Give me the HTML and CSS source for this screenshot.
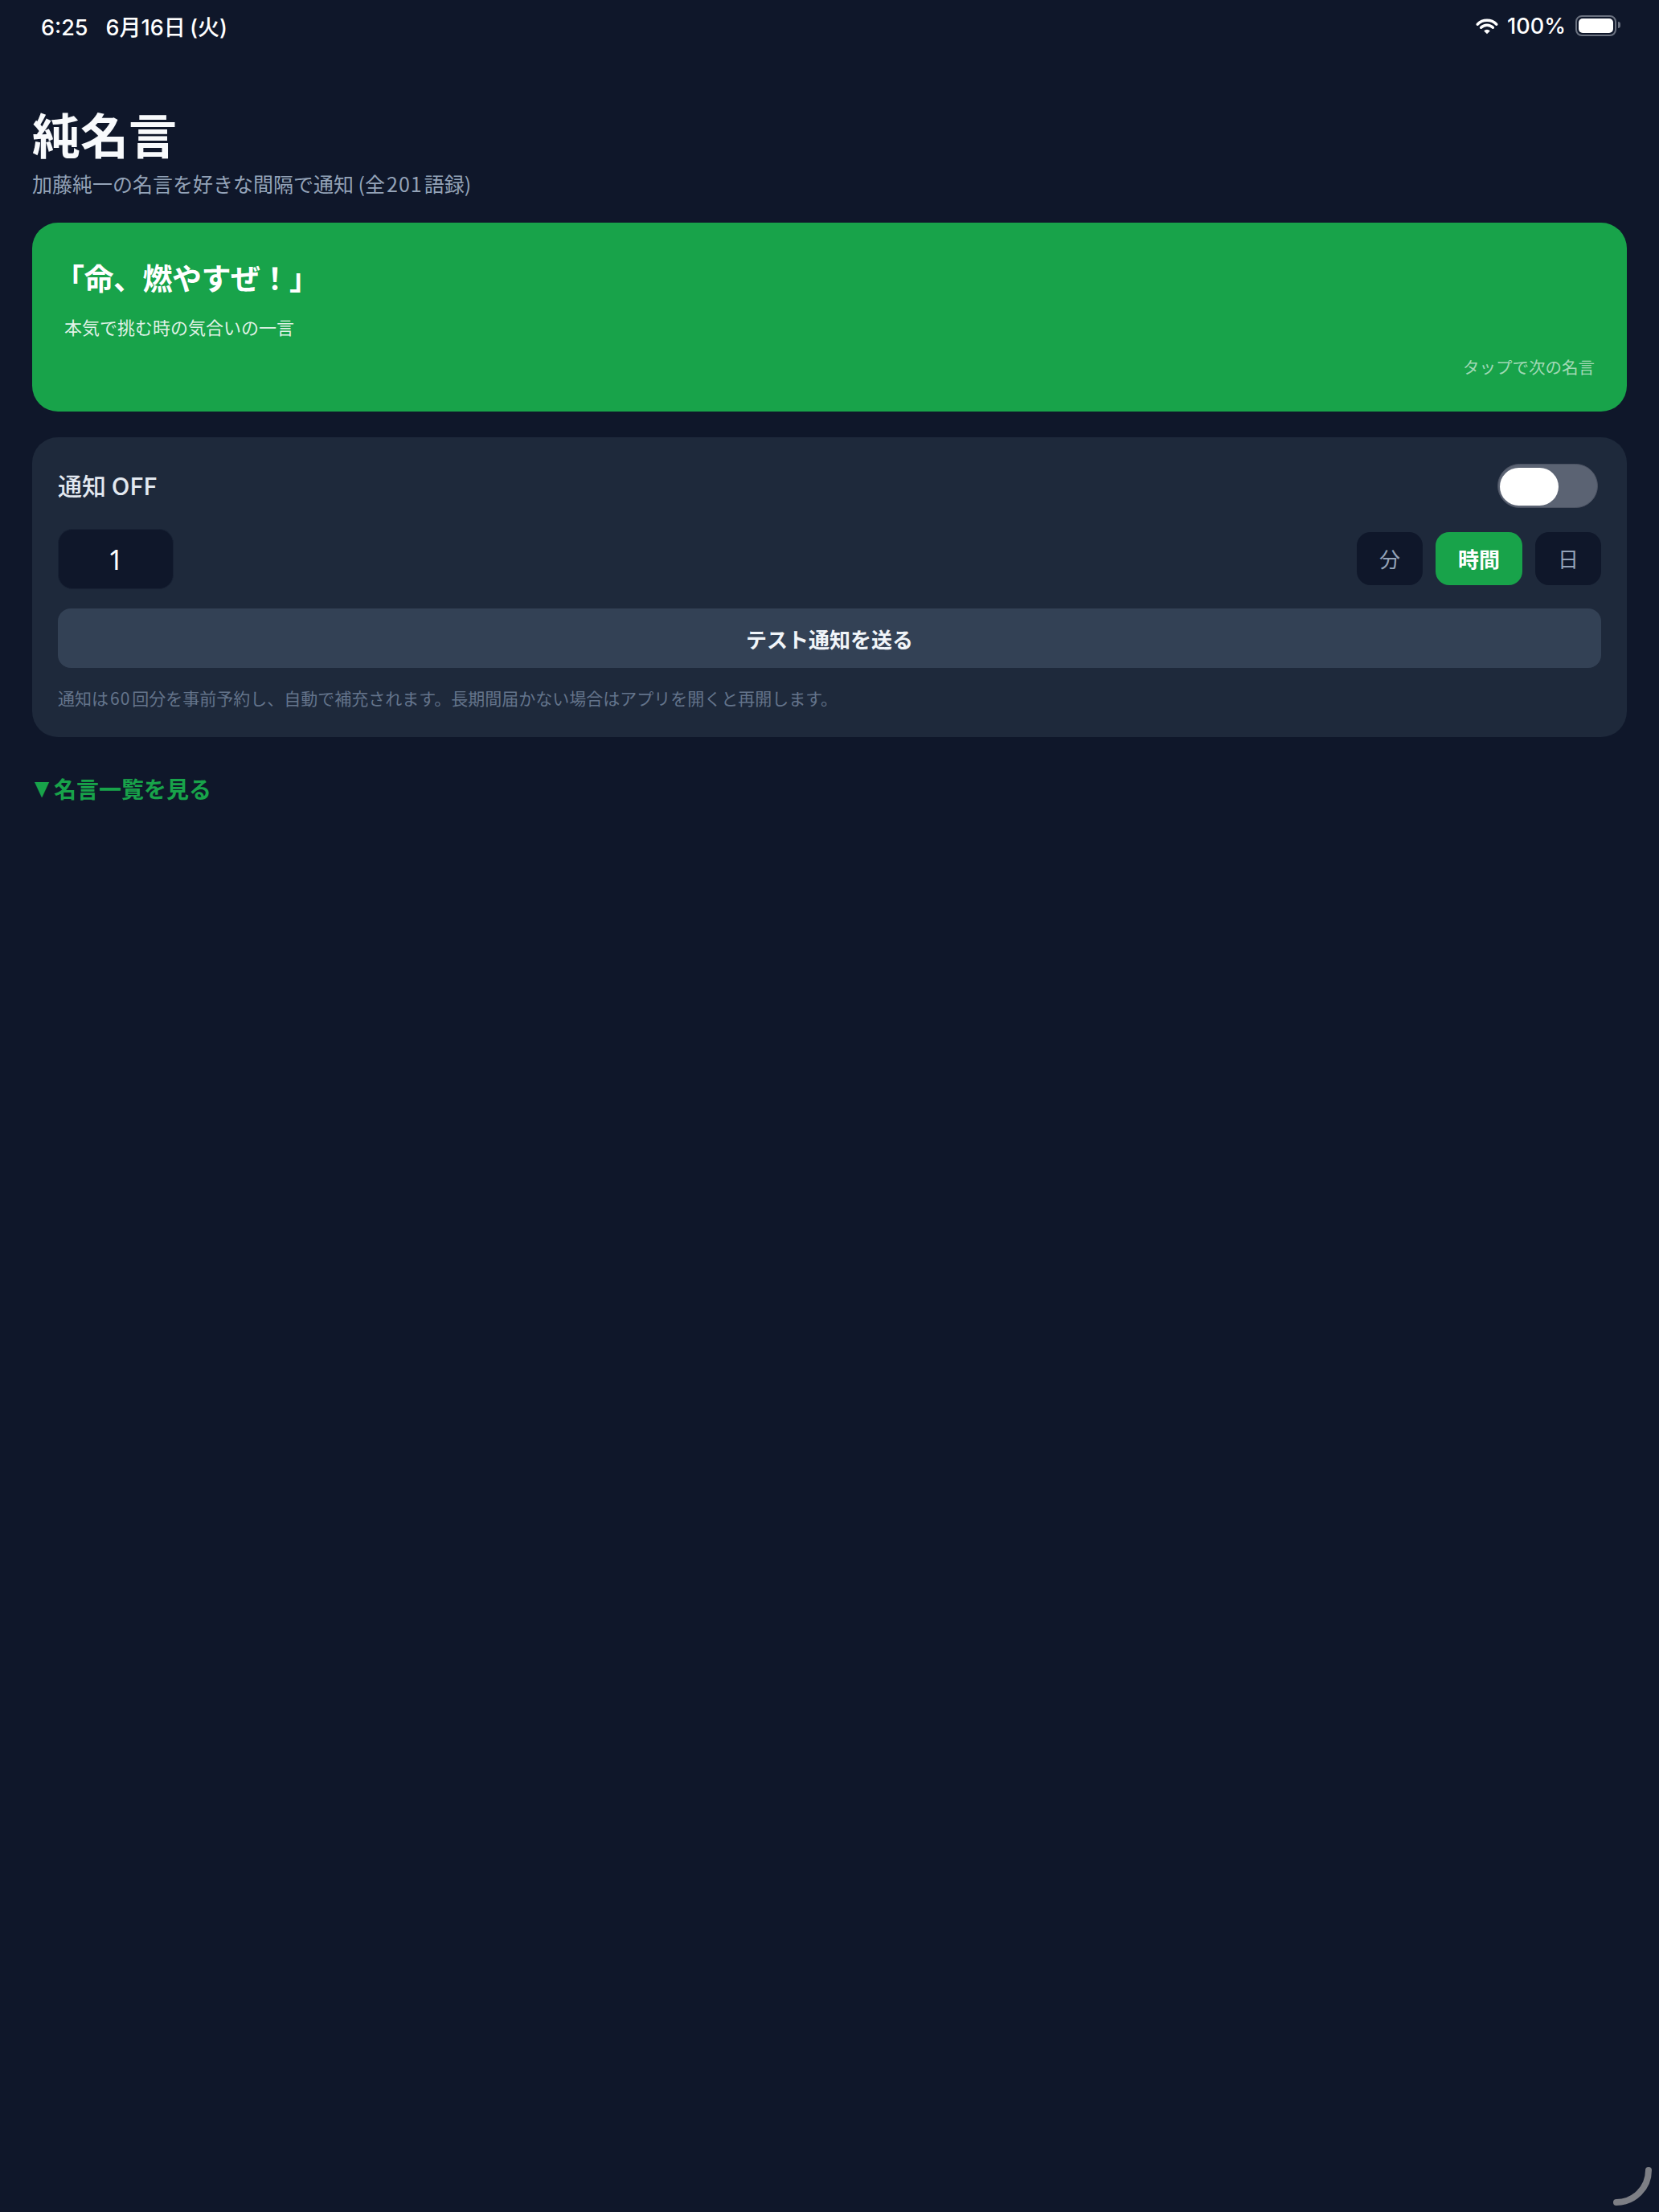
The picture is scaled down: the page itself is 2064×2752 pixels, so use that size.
FILE: index.html
```html
<!DOCTYPE html>
<html lang="ja">
<head>
    <meta charset="UTF-8">
    <meta name="viewport" content="width=device-width, initial-scale=1.0">
    <title>純名言</title>
    <link rel="stylesheet" href="styles.css">
</head>
<body>
    <div class="status-bar">
        <div class="status-left">
            <span class="clock">6:25</span>
            <span class="date">6月16日 (火)</span>
        </div>
        <div class="status-right">
            <svg class="wifi" width="30" height="21" viewBox="0 0 30 21">
                <path d="M3.2 8.2 A16.5 16.5 0 0 1 26.8 8.2" fill="none" stroke="#fff" stroke-width="3.4" stroke-linecap="round"/>
                <path d="M7.6 12.3 A10.5 10.5 0 0 1 22.4 12.3" fill="none" stroke="#fff" stroke-width="3.4" stroke-linecap="round"/>
                <path d="M15 20.2 L11.2 16.4 A5.4 5.4 0 0 1 18.8 16.4 Z" fill="#fff"/>
            </svg>
            <span class="battery-pct">100%</span>
            <div class="battery"><div class="battery-level"></div></div>
        </div>
    </div>

    <main class="page">
        <h1 class="app-title">純名言</h1>
        <p class="app-sub">加藤純一の名言を好きな間隔で通知 (全<span class="num">201</span>語録)</p>

        <!-- current quote, tap to go to the next one -->
        <div class="quote-card">
            <div class="quote-text">「命、燃やすぜ！」</div>
            <div class="quote-note">本気で挑む時の気合いの一言</div>
            <div class="quote-hint">タップで次の名言</div>
        </div>

        <div class="settings-card">
            <div class="row">
                <span class="notify-label">通知 OFF</span>
                <div class="toggle"><div class="toggle-knob"></div></div>
            </div>
            <div class="row">
                <div class="interval-input">1</div>
                <div class="unit-group">
                    <button class="unit-btn">分</button>
                    <button class="unit-btn active">時間</button>
                    <button class="unit-btn">日</button>
                </div>
            </div>
            <button class="test-btn">テスト通知を送る</button>
            <p class="settings-note">通知は<span class="num">60</span>回分を事前予約し、自動で補充されます。長期間届かない場合はアプリを開くと再開します。</p>
        </div>

        <a class="list-link" href="#"><span class="arrow">▼</span>名言一覧を見る</a>
    </main>

    <svg class="corner-handle" width="60" height="60" viewBox="0 0 60 60">
        <path d="M51 10 A40 40 0 0 1 11 50" fill="none" stroke="#7d7f85" stroke-width="8" stroke-linecap="round"/>
    </svg>
</body>
</html>
```

FILE: styles.css
```css
body {
    background-color: #0f172a;
    color: #f8fafc;
    font-family: "Noto Sans CJK JP", "Noto Sans", sans-serif;
    margin: 0;
    min-height: 2752px;
}

/* Top system bar */
.status-bar {
    display: flex;
    justify-content: space-between;
    align-items: center;
    height: 64px;
    padding: 0 53px 0 51px;
    font-family: Inter, "Noto Sans CJK JP", sans-serif;
    font-size: 27px;
    font-weight: 500;
    color: #ffffff;
}
.status-left {
    display: flex;
    align-items: baseline;
    gap: 22px;
}
.date {
    word-spacing: -2px;
}
.status-right {
    display: flex;
    align-items: center;
    gap: 8px;
}
.wifi {
    margin-right: 2px;
}
.battery {
    position: relative;
    width: 43px;
    height: 18px;
    padding: 2px;
    border: 2.5px solid #6b7280;
    border-radius: 8px;
    margin-left: 4px;
}
.battery::after {
    content: "";
    position: absolute;
    right: -7px;
    top: 6px;
    width: 3px;
    height: 8px;
    background: #6b7280;
    border-radius: 0 3px 3px 0;
}
.battery-level {
    width: 100%;
    height: 100%;
    background: #ffffff;
    border-radius: 5px;
}

.page {
    padding: 66px 40px 0 40px;
}

.app-title {
    margin: 0;
    font-size: 60px;
    font-weight: 700;
    line-height: 72px;
    color: #f8fafc;
}
.app-sub {
    margin: 9px 0 0 0;
    font-size: 25px;
    line-height: 35px;
    color: #94a3b8;
}
.num {
    letter-spacing: 1px;
    margin: 0 2px;
}

/* Green quote card */
.quote-card {
    margin-top: 31px;
    background-color: #18a34a;
    border-radius: 32px;
    padding: 44px 40px 40px 40px;
    display: flex;
    flex-direction: column;
}
.quote-text {
    font-size: 37px;
    font-weight: 700;
    line-height: 49px;
    color: #ffffff;
    margin-left: -12px;
    letter-spacing: -0.5px;
}
.quote-note {
    margin-top: 20px;
    font-size: 22px;
    line-height: 33px;
    color: rgba(255, 255, 255, 0.88);
}
.quote-hint {
    margin-top: 18px;
    font-size: 20.5px;
    line-height: 31px;
    text-align: right;
    color: rgba(255, 255, 255, 0.6);
}

/* Notification settings */
.settings-card {
    margin-top: 32px;
    background-color: #1e293b;
    border-radius: 32px;
    padding: 33px 32px 36px 32px;
    display: flex;
    flex-direction: column;
    gap: 24px;
}
.row {
    display: flex;
    justify-content: space-between;
    align-items: center;
}
.notify-label {
    font-size: 30px;
    font-weight: 500;
    color: #e2e8f0;
    margin-top: -3px;
}
.toggle {
    width: 125px;
    height: 55px;
    box-sizing: border-box;
    border-radius: 28px;
    background-color: #5b6373;
    border: 1px solid #4b5262;
    padding: 4px 0 0 2px;
    margin-right: 4px;
}
.toggle-knob {
    width: 73px;
    height: 47px;
    border-radius: 24px;
    background-color: #ffffff;
}
.interval-input {
    width: 144px;
    height: 75px;
    box-sizing: border-box;
    border: 1px solid #182235;
    border-radius: 18px;
    background-color: #0f172a;
    display: flex;
    align-items: center;
    justify-content: center;
    font-family: "Noto Sans", sans-serif;
    font-size: 34px;
    color: #ffffff;
    margin-top: 2px;
}
.unit-group {
    display: flex;
    gap: 16px;
}
.unit-btn {
    height: 66px;
    padding: 0 28px;
    border: none;
    border-radius: 17px;
    background-color: #0f172a;
    color: #94a3b8;
    font-family: "Noto Sans CJK JP", sans-serif;
    font-size: 26px;
}
.unit-btn.active {
    background-color: #18a34a;
    color: #ffffff;
    font-weight: 700;
}
.test-btn {
    height: 74px;
    border: none;
    border-radius: 16px;
    background-color: #334155;
    color: #f1f5f9;
    font-family: "Noto Sans CJK JP", sans-serif;
    font-size: 26px;
    font-weight: 700;
}
.settings-note {
    margin: 0;
    font-size: 21px;
    line-height: 26px;
    color: #64748b;
}

.list-link {
    display: inline-block;
    margin-top: 45px;
    font-size: 28px;
    font-weight: 700;
    line-height: 39px;
    color: #18a34a;
    text-decoration: none;
}
.list-link .arrow {
    display: inline-block;
    font-size: 24px;
    margin-right: 3px;
    transform: translateY(-2px) scaleX(0.8);
}

/* window resize handle in the corner */
.corner-handle {
    position: absolute;
    left: 2000px;
    top: 2690px;
}
```
